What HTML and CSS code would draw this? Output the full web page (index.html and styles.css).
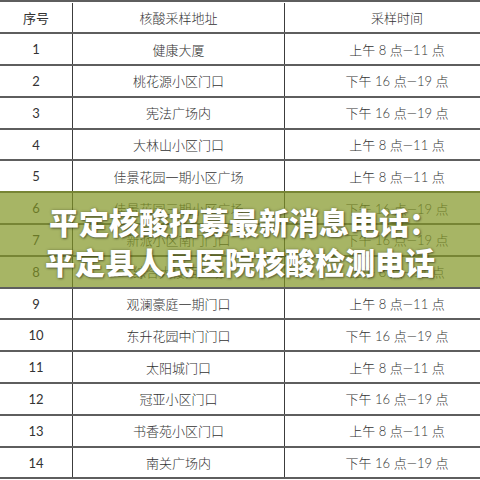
FILE: index.html
```html
<!DOCTYPE html>
<html lang="zh-CN">
<head>
<meta charset="utf-8">
<link rel="stylesheet" href="styles.css">
</head>
<body>
<div class="page">
  <div class="sheet">
    <div class="row head"><div class="c1">序号</div><div class="c2">核酸采样地址</div><div class="c3">采样时间</div></div>
    <div class="row"><div class="c1">1</div><div class="c2">健康大厦</div><div class="c3">上午 8 点—11 点</div></div>
    <div class="row"><div class="c1">2</div><div class="c2">桃花源小区门口</div><div class="c3">下午 16 点—19 点</div></div>
    <div class="row"><div class="c1">3</div><div class="c2">宪法广场内</div><div class="c3">下午 16 点—19 点</div></div>
    <div class="row"><div class="c1">4</div><div class="c2">大林山小区门口</div><div class="c3">上午 8 点—11 点</div></div>
    <div class="row"><div class="c1">5</div><div class="c2">佳景花园一期小区广场</div><div class="c3">上午 8 点—11 点</div></div>
    <div class="row"><div class="c1">6</div><div class="c2">佳景花园三期小区广场</div><div class="c3">下午 16 点—19 点</div></div>
    <div class="row"><div class="c1">7</div><div class="c2">新派小区南门门口</div><div class="c3">下午 16 点—19 点</div></div>
    <div class="row"><div class="c1">8</div><div class="c2">综合大楼西广场</div><div class="c3">上午 8 点—11 点</div></div>
    <div class="row"><div class="c1">9</div><div class="c2">观澜豪庭一期门口</div><div class="c3">上午 8 点—11 点</div></div>
    <div class="row"><div class="c1">10</div><div class="c2">东升花园中门门口</div><div class="c3">下午 16 点—19 点</div></div>
    <div class="row"><div class="c1">11</div><div class="c2">太阳城门口</div><div class="c3">上午 8 点—11 点</div></div>
    <div class="row"><div class="c1">12</div><div class="c2">冠亚小区门口</div><div class="c3">下午 16 点—19 点</div></div>
    <div class="row"><div class="c1">13</div><div class="c2">书香苑小区门口</div><div class="c3">上午 8 点—11 点</div></div>
    <div class="row"><div class="c1">14</div><div class="c2">南关广场内</div><div class="c3">下午 16 点—19 点</div></div>
  </div>
  <div class="banner">
    <div class="title first">平定核酸招募最新消息电话：</div>
    <div class="title">平定县人民医院核酸检测电话</div>
  </div>
</div>
</body>
</html>
```

FILE: styles.css
```css
html, body {
  margin: 0;
  padding: 0;
  background: #ffffff;
}
.page {
  position: relative;
  width: 480px;
  height: 480px;
  overflow: hidden;
  background: #ffffff;
}
.sheet {
  width: 520px;
  padding-top: 0.5px;
  border-top: 2px solid #5e5e5e;
  display: flex;
  flex-direction: column;
  font-family: Lato, "Noto Sans CJK SC", sans-serif;
  font-weight: 300;
  font-size: 13px;
  color: #333333;
}
.row {
  display: flex;
  height: 31.8px;
  box-sizing: border-box;
  border-bottom: 2px solid #5e5e5e;
}
.row > div {
  display: flex;
  align-items: center;
  justify-content: center;
  white-space: nowrap;
}
.c1 {
  width: 72px;
  border-right: 1px solid #3c3c3c;
  font-weight: 400;
}
.c2 {
  width: 211px;
  border-right: 1px solid #3c3c3c;
}
.c3 {
  width: 224px;
}
.banner {
  position: absolute;
  left: 0;
  right: 0;
  top: 191px;
  height: 96px;
  background: rgba(130, 150, 36, 0.7);
  display: flex;
  flex-direction: column;
  align-items: center;
  justify-content: center;
  padding-top: 4px;
  box-sizing: border-box;
}
.title {
  font-family: "Noto Sans CJK SC", sans-serif;
  font-weight: 900;
  font-size: 30px;
  line-height: 40px;
  color: #ffffff;
  white-space: nowrap;
  text-shadow: 1px 1px 2px rgba(40, 40, 20, 0.55), 0 0 3px rgba(40, 40, 20, 0.35);
}
.first {
  padding-left: 8px;
}
```
